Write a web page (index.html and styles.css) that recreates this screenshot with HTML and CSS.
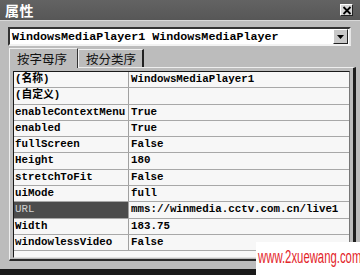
FILE: index.html
```html
<!DOCTYPE html>
<html>
<head>
<meta charset="utf-8">
<link rel="stylesheet" href="styles.css">
</head>
<body>
<div class="window">
  <div class="titlebar">
    <span class="title">属性</span>
    <span class="close"><svg width="10" height="9" viewBox="0 0 10 9"><path d="M1.5 1 L8.5 8 M8.5 1 L1.5 8" stroke="#000" stroke-width="1.8"/></svg></span>
  </div>
  <div class="combo">
    <span class="combo-text">WindowsMediaPlayer1 WindowsMediaPlayer</span>
    <span class="drop"><svg width="7" height="4" viewBox="0 0 7 4"><path d="M0 0 H7 L3.5 4 Z" fill="#000"/></svg></span>
  </div>
  <div class="tabs">
    <div class="tab active">按字母序</div>
    <div class="tab">按分类序</div>
  </div>
  <div class="panel">
    <div class="grid">
      <div class="row"><div class="name">(名称)</div><div class="value">WindowsMediaPlayer1</div></div>
      <div class="row"><div class="name">(自定义)</div><div class="value"></div></div>
      <div class="row"><div class="name">enableContextMenu</div><div class="value">True</div></div>
      <div class="row"><div class="name">enabled</div><div class="value">True</div></div>
      <div class="row"><div class="name">fullScreen</div><div class="value">False</div></div>
      <div class="row"><div class="name">Height</div><div class="value">180</div></div>
      <div class="row"><div class="name">stretchToFit</div><div class="value">False</div></div>
      <div class="row"><div class="name">uiMode</div><div class="value">full</div></div>
      <div class="row"><div class="name selected">URL</div><div class="value">mms://winmedia.cctv.com.cn/live1</div></div>
      <div class="row"><div class="name">Width</div><div class="value">183.75</div></div>
      <div class="row"><div class="name">windowlessVideo</div><div class="value">False</div></div>
    </div>
  </div>
</div>
<div class="watermark"><span class="wm-text">www.2xuewang.com</span></div>
</body>
</html>
```
FILE: styles.css
```css
html, body {
  margin: 0;
  padding: 0;
  width: 360px;
  height: 275px;
  overflow: hidden;
  background: #bdbdbd;
}
.window {
  width: 360px;
  height: 275px;
  box-sizing: border-box;
  background: #bcbcbc;
  border-bottom: 6px solid #1a1a1a;
  display: flex;
  flex-direction: column;
  position: relative;
}
.titlebar {
  height: 21px;
  background: linear-gradient(#636363, #575757);
  border-bottom: 1px solid #d8d8d8;
  display: flex;
  align-items: center;
  justify-content: space-between;
  padding: 0 7px 0 5px;
  box-sizing: border-box;
  flex: none;
}
.title {
  color: #fff;
  font-family: "Noto Sans CJK SC", sans-serif;
  font-weight: bold;
  font-size: 14px;
  line-height: 20px;
  letter-spacing: 0.5px;
}
.close {
  width: 11px;
  height: 10px;
  background: #d6d6d6;
  border: 1px solid;
  border-color: #fff #222 #222 #fff;
  display: flex;
  align-items: center;
  justify-content: center;
}
.combo {
  flex: none;
  margin: 6px 9px 0 8px;
  height: 19px;
  box-sizing: border-box;
  background: #fff;
  border: 2px solid;
  border-color: #333 #e6e6e6 #f2f2f2 #333;
  display: flex;
  align-items: center;
  justify-content: space-between;
}
.combo-text {
  font-family: "Liberation Mono", monospace;
  font-weight: bold;
  font-size: 11.7px;
  color: #000;
  padding-left: 2px;
  white-space: nowrap;
}
.drop {
  width: 13px;
  height: 13px;
  margin-right: 1px;
  background: #c8c8c8;
  border: 1px solid;
  border-color: #fff #222 #222 #fff;
  display: flex;
  align-items: center;
  justify-content: center;
}
.tabs {
  flex: none;
  display: flex;
  align-items: flex-end;
  margin: 2px 0 0 9px;
  height: 19px;
}
.tab {
  font-family: "Noto Sans CJK SC", sans-serif;
  font-size: 12.5px;
  color: #111;
  height: 17px;
  line-height: 17px;
  padding: 0 6px 0 7px;
  background: #bcbcbc;
  border-top: 1px solid #f0f0f0;
  border-left: 1px solid #f0f0f0;
  border-right: 2px solid #222;
}
.tab.active {
  height: 19px;
  line-height: 19px;
  width: 54px;
  padding: 0 6px 0 7px;
  border-right: 1px solid #333;
  position: relative;
  z-index: 1;
  margin-bottom: -1px;
}
.panel {
  flex: none;
  margin: 0 4px 0 9px;
  height: 194px;
  box-sizing: border-box;
  border-top: 1px solid #eee;
  border-left: 1px solid #eee;
  border-right: 3px solid #1e1e1e;
  border-bottom: 2px solid #2a2a2a;
  padding: 3px 3px 0 3px;
}
.grid {
  height: 187px;
  box-sizing: border-box;
  background: #f7f7f7;
  border-top: 1px solid #1a1a1a;
  border-left: 1px solid #1a1a1a;
  border-right: 1px solid #777;
  border-bottom: 1px solid #e0e0e0;
}
.row {
  display: grid;
  grid-template-columns: 115px 1fr;
  height: 16.3px;
  box-sizing: border-box;
  border-bottom: 1px solid #a8a8a8;
  font-family: "Liberation Mono", "Noto Sans CJK SC", monospace;
  font-weight: bold;
  font-size: 10.8px;
  color: #000;
  line-height: 15px;
  white-space: nowrap;
}
.name {
  border-right: 1px solid #a0a0a0;
  padding-left: 1px;
  overflow: hidden;
}
.name.selected {
  background: #4c4c4c;
  color: #d0d0d0;
  font-weight: normal;
}
.value {
  padding-left: 2px;
  overflow: hidden;
}
.watermark {
  position: absolute;
  left: 256px;
  top: 242px;
  width: 104px;
  height: 33px;
  background: #fff;
}
.wm-text {
  display: block;
  width: 156px;
  color: #e3262b;
  font-family: "Liberation Sans", sans-serif;
  font-size: 18px;
  line-height: 30px;
  white-space: nowrap;
  transform: scaleX(0.63);
  transform-origin: 0 0;
  margin-left: 2px;
}
```
